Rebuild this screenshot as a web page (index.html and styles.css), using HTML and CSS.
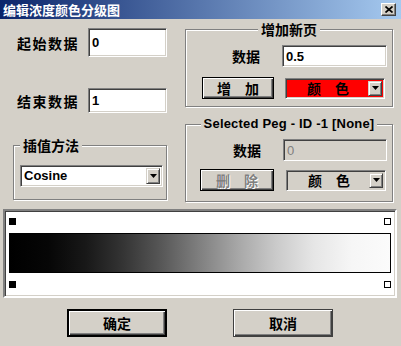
FILE: index.html
```html
<!DOCTYPE html>
<html lang="zh">
<head>
<meta charset="UTF-8">
<title>编辑浓度颜色分级图</title>
<link rel="stylesheet" href="styles.css">
</head>
<body>
<div class="window">
  <div class="titlebar">
    <span class="title">编辑浓度颜色分级图</span>
    <span class="close"><svg width="8" height="7" viewBox="0 0 8 7"><path d="M0.5 0.5L7.5 6.5M7.5 0.5L0.5 6.5" stroke="#000" stroke-width="1.7"/></svg></span>
  </div>

  <div class="main">
    <div class="left">
      <div class="field first"><span class="label">起始数据</span><div class="edit tall">0</div></div>
      <div class="field second"><span class="label">结束数据</span><div class="edit">1</div></div>
      <fieldset class="group interp">
        <legend>插值方法</legend>
        <div class="combo white">
          <span class="combo-text latin">Cosine</span>
          <span class="arrow"><svg width="7" height="4" viewBox="0 0 7 4"><path d="M0 0h7L3.5 4z" fill="#000"/></svg></span>
        </div>
      </fieldset>
    </div>

    <div class="right">
      <fieldset class="group add">
        <legend>增加新页</legend>
        <div class="row"><span class="label">数据</span><div class="edit">0.5</div></div>
        <div class="row">
          <div class="btn">增　加</div>
          <div class="combo red">
            <span class="combo-text">颜　色</span>
            <span class="arrow"><svg width="7" height="4" viewBox="0 0 7 4"><path d="M0 0h7L3.5 4z" fill="#000"/></svg></span>
          </div>
        </div>
      </fieldset>
      <fieldset class="group peg">
        <legend class="latin">Selected Peg - ID -1 [None]</legend>
        <div class="row"><span class="label">数据</span><div class="edit disabled">0</div></div>
        <div class="row">
          <div class="btn disabled">删　除</div>
          <div class="combo gray">
            <span class="combo-text">颜　色</span>
            <span class="arrow"><svg width="7" height="4" viewBox="0 0 7 4"><path d="M0 0h7L3.5 4z" fill="#000"/></svg></span>
          </div>
        </div>
      </fieldset>
    </div>
  </div>

  <div class="ramp">
    <div class="marks"><span class="mark filled"></span><span class="mark hollow"></span></div>
    <div class="bar"></div>
    <div class="marks low"><span class="mark filled"></span><span class="mark hollow"></span></div>
  </div>

  <div class="buttons">
    <div class="btn big default">确定</div>
    <div class="btn big">取消</div>
  </div>
</div>
</body>
</html>
```

FILE: styles.css
```css
body { margin: 0; }
.window { width: 401px; height: 346px; background: #d4d0c8; font-family: "Noto Sans CJK SC", sans-serif; overflow: hidden; }

.titlebar { height: 19px; display: flex; align-items: center; justify-content: space-between; background: linear-gradient(to right, #0a246a, #a6caf0); }
.title { color: #fff; font-weight: bold; font-size: 13px; line-height: 19px; padding-left: 3px; }
.close { width: 15px; height: 13px; margin-right: 5px; box-sizing: border-box; background: #d4d0c8; border: 1px solid; border-color: #fff #404040 #404040 #fff; box-shadow: inset -1px -1px #808080; display: flex; align-items: center; justify-content: center; }

.main { display: flex; align-items: flex-start; height: 190px; }
.left { width: 154px; margin-left: 13px; }
.right { width: 208px; margin-left: 18px; }

.label { font-weight: bold; font-size: 14px; line-height: 16px; color: #000; }
.latin { font-family: "Liberation Sans", sans-serif; }

.field { display: flex; align-items: center; }
.field.first { margin-top: 9px; }
.field.second { margin-top: 31px; }
.field .label { width: 75px; padding-left: 4px; box-sizing: border-box; letter-spacing: 1.5px; }
.field .edit { width: 79px; height: 25px; }
.field .edit.tall { height: 29px; }

.edit { box-sizing: border-box; display: flex; align-items: center; background: #fff; border: 1px solid; border-color: #808080 #fff #fff #808080; box-shadow: inset 1px 1px #404040, inset -1px -1px #d4d0c8; font: bold 13px "Liberation Sans", sans-serif; padding: 0 3px; color: #000; }
.edit.disabled { background: #d4d0c8; color: #808080; font-weight: normal; }

.group { margin: 0; padding: 0; min-width: 0; border: 1px solid #808080; box-shadow: inset 1px 1px #fff, 1px 1px #fff; }
.group legend { font-weight: bold; font-size: 14px; line-height: 14px; padding: 0 3px; background: #d4d0c8; }
.group.interp { margin-top: 25px; padding-bottom: 12px; }
.group.interp legend { margin-left: 6px; }
.group.add { margin-top: 3px; padding-bottom: 7px; }
.group.add legend, .group.peg legend { margin: 0 auto; }
.group.peg { margin-top: 10px; padding-bottom: 10px; }
.group.peg legend { font-size: 13px; letter-spacing: 0.2px; }

.row { display: flex; align-items: center; height: 22px; }
.row .label { width: 50px; }
.row .edit { width: 105px; height: 22px; }
.add .row:first-of-type { margin-top: 9px; padding-left: 46px; }
.add .row + .row { margin-top: 10px; padding-left: 16px; }
.peg .row:first-of-type { margin-top: 8px; padding-left: 47px; }
.peg .row + .row { margin-top: 8px; padding-left: 14px; }
.peg .row .edit { width: 104px; }
.row .btn { width: 72px; height: 22px; margin-right: 11px; }
.peg .row .btn { width: 74px; margin-right: 12px; }
.row .combo { width: 100px; height: 21px; }

.combo { box-sizing: border-box; display: flex; border: 1px solid; border-color: #808080 #fff #fff #808080; box-shadow: inset 1px 1px #404040, inset -1px -1px #d4d0c8; padding: 2px; }
.combo.white { background: #fff; width: 143px; height: 22px; margin: 13px 0 0 6px; }
.combo.red { background: #ff0000; }
.combo.gray { background: #d4d0c8; }
.combo-text { flex: 1; display: flex; align-items: center; justify-content: center; font-weight: bold; font-size: 14px; line-height: 14px; color: #000; }
.combo.white .combo-text { justify-content: flex-start; font-size: 13px; padding-left: 1px; }
.arrow { width: 14px; box-sizing: border-box; background: #d4d0c8; border: 1px solid; border-color: #d4d0c8 #404040 #404040 #d4d0c8; box-shadow: inset 1px 1px #fff, inset -1px -1px #808080; display: flex; align-items: center; justify-content: center; }

.btn { box-sizing: border-box; display: flex; align-items: center; justify-content: center; background: #d4d0c8; border: 1px solid #000; box-shadow: inset 1px 1px #fff, inset -1px -1px #404040, inset -2px -2px #808080; font-weight: bold; font-size: 14px; line-height: 14px; color: #000; }
.btn.disabled { color: #808080; text-shadow: 1px 1px #fff; }

.ramp { margin-left: 3px; width: 394px; height: 89px; box-sizing: border-box; background: #fff; border: 2px solid; border-color: #808080 #fff #fff #808080; box-shadow: inset 1px 1px #404040, inset -1px -1px #d4d0c8; padding: 0 4px; }
.marks { display: flex; justify-content: space-between; margin-top: 7px; }
.marks.low { margin-top: 8px; }
.mark { width: 7px; height: 7px; box-sizing: border-box; }
.mark.filled { background: #000; }
.mark.hollow { border: 1px solid #000; background: #fff; }
.bar { margin-top: 8px; height: 40px; box-sizing: border-box; border: 1px solid #000; background: linear-gradient(to right, #000 0%, #060606 10%, #181818 20%, #353535 30%, #585858 40%, #808080 50%, #a7a7a7 60%, #cacaca 70%, #e6e6e6 80%, #f6f6f6 90%, #fbfbfb 100%); }

.buttons { display: flex; margin-top: 11px; padding-left: 67px; gap: 66px; }
.btn.big { width: 100px; height: 28px; border-color: #404040; }
.btn.default { border: 2px solid #000; }
```
